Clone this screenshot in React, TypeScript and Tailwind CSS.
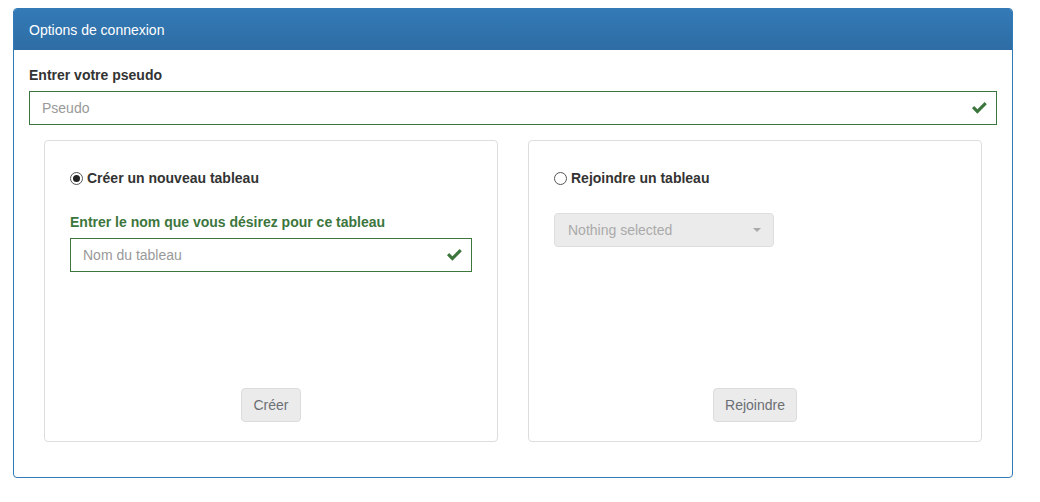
import React from "react";

function Check({ className }: { className?: string }) {
  return (
    <svg className={className} width="15" height="12" viewBox="0 0 15 12" fill="#3c763d">
      <path d="M0 6.3 L2.2 4.1 L5.4 7.3 L12.6 0.1 L14.8 2.3 L5.4 11.7 Z" />
    </svg>
  );
}

function Radio({ checked }: { checked?: boolean }) {
  return (
    <span className="inline-flex h-[13px] w-[13px] items-center justify-center rounded-full border border-[#555] bg-white">
      {checked && <span className="h-[7px] w-[7px] rounded-full bg-[#222]" />}
    </span>
  );
}

export default function App() {
  const font = { fontFamily: '"Liberation Sans", Arial, sans-serif' };
  return (
    <div className="min-h-[502px] bg-white pl-[13px] pt-[8px] text-[14px] leading-[20px] text-[#333]" style={font}>
      <div className="w-[1000px] overflow-hidden rounded-[4px] border border-[#337ab7]">
        <div className="border-b border-[#2e6da4] bg-gradient-to-b from-[#337ab7] to-[#2e6da4] px-[15px] pb-[9px] pt-[11px] text-white">
          Options de connexion
        </div>
        <div className="px-[15px] pb-[15px] pt-[15px]">
          <div className="mb-[6px] font-bold">Entrer votre pseudo</div>
          <div className="relative mb-[15px] flex h-[34px] items-center border border-[#3c763d] px-[12px] text-[#999]">
            Pseudo
            <Check className="absolute right-[9px] top-[10px]" />
          </div>
          <div className="flex gap-[30px] px-[15px] pb-[20px]">
            <div className="flex h-[302px] flex-1 flex-col rounded-[4px] border border-[#ddd] px-[25px] pb-[19px] pt-[27px]">
              <div className="flex items-center gap-[4px] font-bold">
                <Radio checked />
                <span>Créer un nouveau tableau</span>
              </div>
              <div className="mb-[6px] mt-[24px] font-bold text-[#3c763d]">
                Entrer le nom que vous désirez pour ce tableau
              </div>
              <div className="relative flex h-[34px] items-center border border-[#3c763d] px-[12px] text-[#999]">
                Nom du tableau
                <Check className="absolute right-[9px] top-[10px]" />
              </div>
              <div className="mt-auto flex justify-center">
                <div className="flex h-[34px] items-center rounded-[4px] border border-[#dcdcdc] bg-[#ebebeb] px-[11px] text-[#6b6f75]">
                  Créer
                </div>
              </div>
            </div>
            <div className="flex h-[302px] flex-1 flex-col rounded-[4px] border border-[#ddd] px-[25px] pb-[19px] pt-[27px]">
              <div className="flex items-center gap-[4px] font-bold">
                <Radio />
                <span>Rejoindre un tableau</span>
              </div>
              <div className="mt-[25px] flex h-[34px] w-[220px] items-center justify-between rounded-[4px] border border-[#dedede] bg-[#ebebeb] pl-[13px] pr-[12px] text-[#aaa]">
                <span>Nothing selected</span>
                <svg width="8" height="4" viewBox="0 0 8 4" fill="#aaa">
                  <path d="M0 0 L8 0 L4 4 Z" />
                </svg>
              </div>
              <div className="mt-auto flex justify-center">
                <div className="flex h-[34px] items-center rounded-[4px] border border-[#dcdcdc] bg-[#ebebeb] px-[11px] text-[#6b6f75]">
                  Rejoindre
                </div>
              </div>
            </div>
          </div>
        </div>
      </div>
    </div>
  );
}
